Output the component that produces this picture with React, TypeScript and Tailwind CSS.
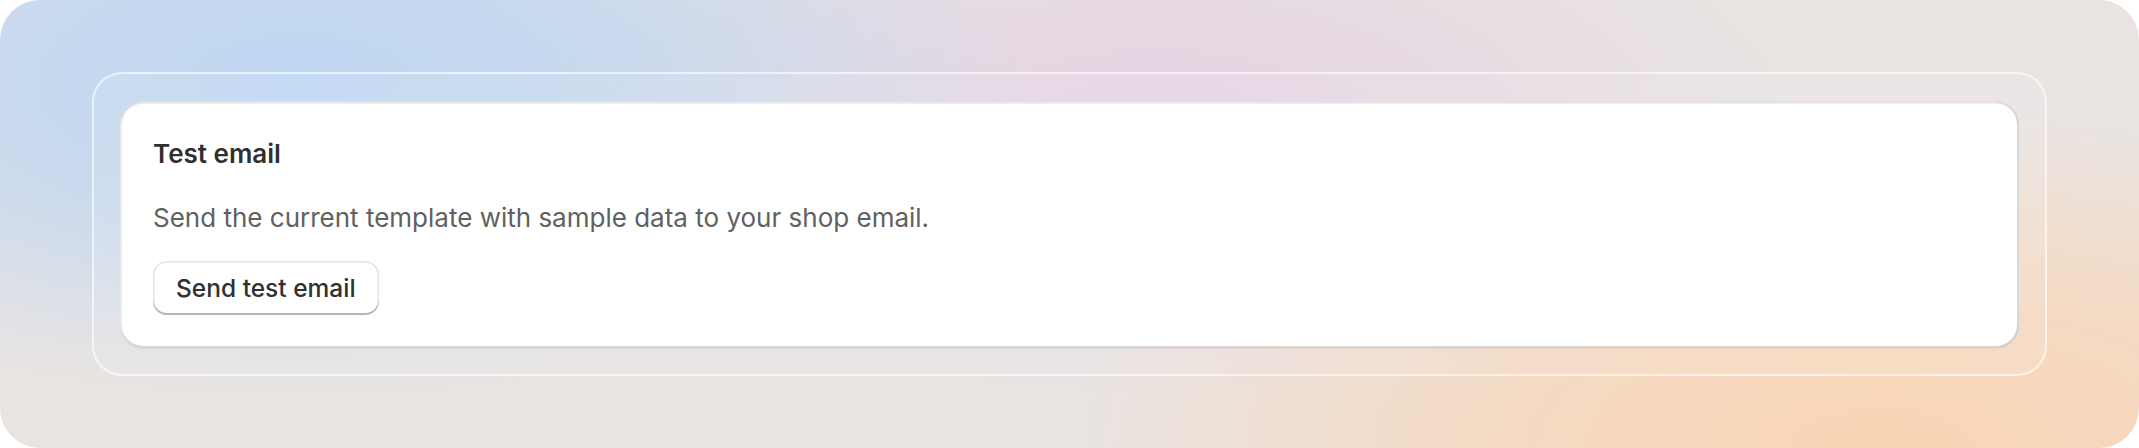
import React from "react";

// Polaris-style "Test email" card sitting in a frosted frame over a pastel wash.
export default function App() {
  return (
    <div className="h-[448px] w-[2139px] bg-white font-['Inter',sans-serif]">
      <div className="flex h-full w-full items-center justify-center rounded-[40px] bg-[#e9e4e2] bg-[radial-gradient(ellipse_34%_70%_at_14%_18%,rgba(190,214,242,1)_0%,rgba(196,216,240,0.85)_45%,rgba(196,216,240,0)_100%),radial-gradient(ellipse_30%_60%_at_54%_28%,rgba(228,208,226,0.95)_0%,rgba(228,208,226,0)_100%),radial-gradient(ellipse_38%_75%_at_88%_100%,rgba(250,212,180,1)_0%,rgba(248,214,184,0.7)_50%,rgba(248,214,184,0)_100%)] px-[92px] py-[72px]">
        <div className="flex h-full w-full rounded-[30px] border-2 border-white/60 bg-white/10 px-[26px] pb-[26px] pt-[27px]">
          <div className="flex w-full flex-col items-start rounded-[24px] bg-white px-[33px] pb-[31px] pt-[37px] shadow-[0_1px_0_rgba(26,26,26,0.07),inset_0_2.5px_0_rgba(208,208,208,0.6),inset_2px_0_0_rgba(220,220,220,0.6),inset_-2px_0_0_rgba(200,200,200,0.7),inset_0_-2px_0_rgba(180,180,180,0.55)]">
            <h2 className="text-[26px] font-semibold leading-[32px] text-[#303030]">
              Test email
            </h2>
            <p className="mt-[32px] text-[26px] leading-[32px] text-[#616161]">
              Send the current template with sample data to your shop email.
            </p>
            <button
              type="button"
              className="mt-[27px] flex h-[54px] items-center rounded-[14px] bg-white px-[23px] text-[24.5px] font-medium text-[#303030] shadow-[inset_0_-2px_0_#b5b5b5,inset_0_0_0_1.5px_rgba(0,0,0,0.1),inset_0_1px_0_2px_#fff]"
            >
              Send test email
            </button>
          </div>
        </div>
      </div>
    </div>
  );
}
